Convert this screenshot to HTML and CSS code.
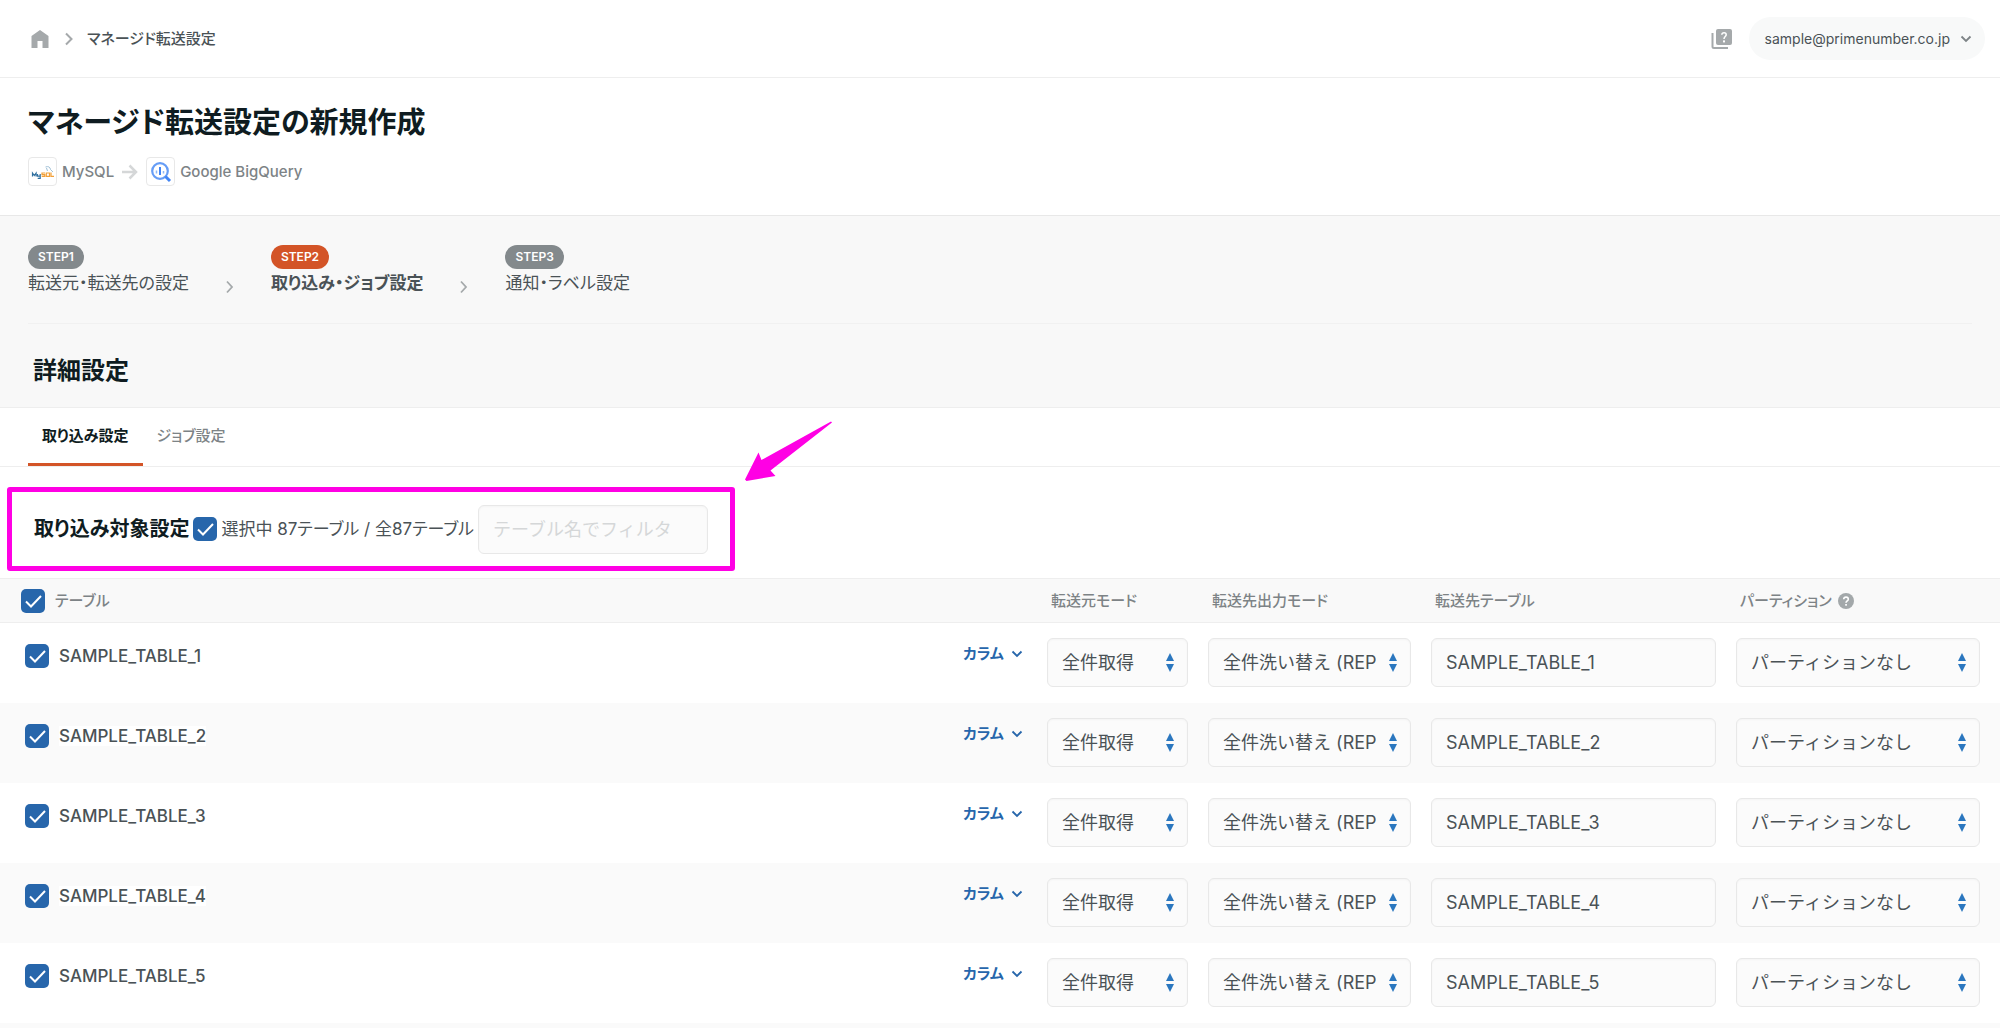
FILE: index.html
```html
<!DOCTYPE html>
<html lang="ja">
<head>
<meta charset="utf-8">
<meta name="viewport" content="width=device-width, initial-scale=1">
<title>マネージド転送設定の新規作成</title>
<link rel="stylesheet" href="styles.css">
</head>
<body>
<svg class="sprite" aria-hidden="true">
  <symbol id="chevron-down" viewBox="0 0 12 12"><path d="M1.500 3.500l4.500 4.500 4.500-4.500" fill="none" stroke="currentColor" stroke-width="1.800"/></symbol>
  <symbol id="chevron-right" viewBox="0 0 12 14"><path d="M3 1.500l5 5.500-5 5.500" fill="none" stroke="currentColor" stroke-width="1.800"/></symbol>
</svg>

<header class="topbar">
  <nav class="breadcrumb" aria-label="パンくず">
    <a class="home" href="#" aria-label="ホーム"><svg width="18" height="20" viewBox="0 0 18 20"><path d="M9 1L17.500 7V19H11.500V12H6.500V19H.5V7Z" fill="currentColor"/></svg></a>
    <svg class="crumb-sep" width="12" height="14" viewBox="0 0 12 14"><path d="M3 1.500l5.500 5.500-5.500 5.500" fill="none" stroke="currentColor" stroke-width="2"/></svg>
    <a class="crumb" href="#">マネージド転送設定</a>
  </nav>
  <div class="account">
    <a class="docs" href="#" aria-label="ドキュメント"><svg width="22" height="22" viewBox="0 0 22 22"><path d="M1.500 5v13.500a1.500 1.500 0 0 0 1.500 1.500H17" fill="none" stroke="currentColor" stroke-width="2"/><rect x="5" y="1" width="16" height="16" rx="2" fill="currentColor"/><path d="M10.800 6.700C11 4 15.200 4 15.200 6.700C15.200 8.600 13 8.500 13 11" fill="none" stroke="#fff" stroke-width="1.500"/><rect x="12" y="12.400" width="2" height="2" fill="#fff"/></svg></a>
    <button class="user" type="button">sample@primenumber.co.jp<svg width="12" height="12"><use href="#chevron-down"/></svg></button>
  </div>
</header>

<main>
<section class="intro">
  <h1>マネージド転送設定の新規作成</h1>
  <div class="route">
    <span class="logo"><svg width="24" height="24" viewBox="0 0 24 24"><g fill="none" stroke-width="1.200"><path d="M1.500 16.500v-3.500l1.800 2.500 1.800-2.500v3.500M6.500 14v2.200h2.500M9.200 14v4.300h-2.500" stroke="#2f6f9f"/><path d="M14 13h-3v1.700h2.700v1.700h-3M15.300 13h3.200v3.300h-3.200zM20 12.500v3.800h3" stroke="#f2a13a"/><path d="M14.500 7c3-1 4.500 0 5 2.500l2.500 2.500M15.500 8l1 3" stroke="#9fbfd6" stroke-width="1"/></g></svg></span>
    <span>MySQL</span>
    <svg class="route-arrow" width="16" height="16" viewBox="0 0 16 16"><path d="M0 8H13.500M7.500 1.500l6.500 6.500-6.500 6.500" fill="none" stroke="currentColor" stroke-width="2.500"/></svg>
    <span class="logo"><svg width="24" height="24" viewBox="0 0 24 24"><circle cx="11" cy="11" r="7.800" fill="none" stroke="#669df6" stroke-width="2.200"/><path d="M16.500 16.500l4.500 4.500" stroke="#4285f4" stroke-width="3"/><path d="M11 7v8" stroke="#4285f4" stroke-width="2"/><path d="M7.500 10.500v3M14.500 11v2.500" stroke="#8db8f8" stroke-width="1.500"/></svg></span>
    <span>Google BigQuery</span>
  </div>
</section>

<section class="setup">
  <ol class="steps">
    <li><span class="badge">STEP1</span><span class="step-name">転送元・転送先の設定</span></li>
    <li class="sep" aria-hidden="true"><svg width="12" height="14"><use href="#chevron-right"/></svg></li>
    <li class="current" aria-current="step"><span class="badge">STEP2</span><span class="step-name">取り込み・ジョブ設定</span></li>
    <li class="sep" aria-hidden="true"><svg width="12" height="14"><use href="#chevron-right"/></svg></li>
    <li><span class="badge">STEP3</span><span class="step-name">通知・ラベル設定</span></li>
  </ol>
  <h2>詳細設定</h2>
</section>

<nav class="tabs">
  <a class="tab active" href="#">取り込み設定</a>
  <a class="tab" href="#">ジョブ設定</a>
</nav>

<section class="filter">
  <h3>取り込み対象設定</h3>
  <input class="check" type="checkbox" id="selected" checked>
  <label for="selected">選択中 87テーブル / 全87テーブル</label>
  <input class="field" type="text" aria-label="テーブル名でフィルタ" placeholder="テーブル名でフィルタ">
  <svg class="callout" width="88" height="60" viewBox="0 0 88 60"><path d="M86 .5L87 1.500L25.500 49.500L30.500 55L1.500 60L0 58.500L13.500 31.500L16.500 39Z" fill="#ff00e4"/></svg>
</section>

<table>
  <colgroup><col><col class="c-cols"><col class="c-source"><col class="c-output"><col class="c-dest"><col class="c-part"></colgroup>
  <thead>
    <tr>
      <th colspan="2"><div class="all"><input class="check" type="checkbox" id="all" checked><label for="all">テーブル</label></div></th>
      <th>転送元モード</th><th>転送先出力モード</th><th>転送先テーブル</th>
      <th>パーティション <svg class="help" width="16" height="16" viewBox="0 0 16 16"><circle cx="8" cy="8" r="8" fill="#a3a8aa"/><path d="M5.700 6.300C5.900 3.300 10.300 3.500 10.300 6.200C10.300 7.900 8 7.900 8 9.800" fill="none" stroke="#fff" stroke-width="1.600"/><rect x="7.200" y="11" width="1.700" height="1.700" fill="#fff"/></svg></th>
    </tr>
  </thead>
  <tbody id="rows"></tbody>
</table>
</main>
<footer></footer>

<template id="row">
  <tr>
    <td><div class="name"><input class="check" type="checkbox" checked><label></label></div></td>
    <td><button class="cols" type="button">カラム<svg width="12" height="12"><use href="#chevron-down"/></svg></button></td>
    <td><div class="pick"><select class="field" aria-label="転送元モード"><option>全件取得</option></select></div></td>
    <td><div class="pick"><select class="field" aria-label="転送先出力モード"><option>全件洗い替え (REPLACE)</option></select></div></td>
    <td><input class="field dest" type="text" aria-label="転送先テーブル"></td>
    <td><div class="pick"><select class="field" aria-label="パーティション"><option>パーティションなし</option></select></div></td>
  </tr>
</template>
<script src="rows.js"></script>
</body>
</html>
```
FILE: styles.css
```css
* { box-sizing: border-box; }

body {
  display: flex;
  flex-direction: column;
  min-height: 100vh;
  margin: 0;
  background: #fff;
  color: #4a5256;
  font: 17px/24px Inter, "Noto Sans CJK JP", sans-serif;
  font-feature-settings: "palt";
}
footer { flex: 1; background: #fafafa; }

h1, h2, h3 { margin: 0; color: #0f1c21; font-weight: 600; }
a { color: inherit; text-decoration: none; }
button, input, select { font: inherit; color: inherit; }
button { border: 0; background: none; cursor: pointer; }
svg { flex: none; }
.sprite { position: absolute; width: 0; height: 0; }

.topbar {
  display: flex;
  align-items: center;
  justify-content: space-between;
  height: 78px;
  padding: 0 15px 0 31px;
  border-bottom: 1px solid #eee;
}
.breadcrumb, .account { display: flex; align-items: center; }
.home, .docs { display: flex; color: #a5a9ab; }
.crumb-sep { margin: 0 12px 0 14px; color: #a5a9ab; }
.crumb { font-size: 15px; font-weight: 500; }
.account { gap: 16px; }
.user {
  display: flex;
  align-items: center;
  gap: 10px;
  height: 43px;
  padding: 0 13px 0 16px;
  border-radius: 22px;
  background: #f8f9f9;
  font-size: 14px;
}
.user svg { color: #7d8386; }

.intro { padding: 25px 28px 29px; border-bottom: 1px solid #e8e8e8; }
.intro h1 { font-size: 29px; line-height: 40px; }
.route {
  display: flex;
  align-items: center;
  gap: 5px;
  margin-top: 14px;
  color: #7d8386;
  font-size: 15px;
  font-weight: 500;
}
.logo {
  display: grid;
  place-items: center;
  width: 29px;
  height: 29px;
  border: 1px solid #e8e8e8;
  border-radius: 4px;
}
.route-arrow { margin: 0 3px; color: #d5d7d8; }

.setup { padding: 29px 28px 0; background: #f8f8f8; border-bottom: 1px solid #eee; }
.steps {
  display: flex;
  gap: 35px;
  margin: 0;
  padding: 0 0 26px;
  border-bottom: 1px solid #f1f1f1;
  list-style: none;
}
.badge {
  display: block;
  width: fit-content;
  padding: 0 10px;
  border-radius: 12px;
  background: #83898c;
  color: #fff;
  font-size: 12px;
  font-weight: 600;
}
.step-name { display: block; line-height: 28px; }
.current .badge { background: #d35427; }
.current .step-name { font-weight: 600; }
.sep { display: flex; align-items: flex-end; padding-bottom: 3px; color: #a5a9ab; }
.setup h2 { padding: 31px 5px 20px; font-size: 24px; line-height: 32px; }

.tabs {
  display: flex;
  padding: 0 28px;
  border-bottom: 1px solid #eee;
  color: #7d8386;
  font-size: 15px;
  font-weight: 500;
}
.tab { padding: 16px 14px 15px; border-bottom: 3px solid transparent; }
.tab.active { border-color: #d35427; color: #0f1c21; font-weight: 600; }

.filter {
  position: relative;
  display: flex;
  align-items: center;
  gap: 4px;
  width: fit-content;
  height: 84px;
  margin: 20px 7px 7px;
  padding: 0 22px;
  border: 5px solid #ff00e4;
  border-radius: 3px;
}
.filter h3 { font-size: 20px; }
.filter .field { width: 230px; }
.callout { position: absolute; left: 733px; top: -71px; }

.check {
  appearance: none;
  flex: none;
  width: 24px;
  height: 24px;
  margin: 0;
  border-radius: 5px;
  background: #2766ab url("data:image/svg+xml,%3Csvg xmlns='http://www.w3.org/2000/svg' viewBox='0 0 24 24'%3E%3Cpath d='M5 12.500l5 5L20 7' fill='none' stroke='white' stroke-width='2'/%3E%3C/svg%3E");
}
.field {
  display: block;
  width: 100%;
  height: 49px;
  padding: 0 14px;
  border: 1px solid #e8e8e8;
  border-radius: 6px;
  background: #fbfbfb;
  box-shadow: inset 0 1px 2px #00000008;
  font-size: 18px;
  font-feature-settings: normal;
}
.field::placeholder { color: #d5d7d8; opacity: 1; }

table { width: 100%; border-collapse: collapse; table-layout: fixed; }
.c-cols { width: 92px; }
.c-source { width: 161px; }
.c-output { width: 223px; }
.c-dest { width: 305px; }
.c-part { width: 264px; }
th {
  height: 44px;
  padding: 0 4px;
  border: solid #eee;
  border-width: 1px 0;
  background: #f9f9f9;
  color: #7d8386;
  font-size: 15px;
  font-weight: 500;
  text-align: left;
}
th:first-child { padding-left: 21px; }
.all, .name { display: flex; align-items: center; gap: 10px; }
.help { vertical-align: -3px; margin-left: 2px; }
td { height: 80px; padding: 15px 20px 16px 0; vertical-align: top; }
tr:nth-child(even) td { background: #fafafa; }
td:first-child { padding: 21px 0 0 25px; }
.name { font-weight: 500; }
tr:nth-child(even) .name label { background: #fff; line-height: 20px; }
.cols {
  display: flex;
  align-items: center;
  gap: 7px;
  padding: 4px 0 0 8px;
  color: #2766ab;
  font-size: 15px;
  font-weight: 600;
  font-feature-settings: inherit;
}
.pick { position: relative; }
.pick select { appearance: none; padding-right: 34px; }
.pick::after {
  content: "";
  position: absolute;
  right: 14px;
  top: 15px;
  width: 8px;
  height: 19px;
  background: #2b77bf;
  clip-path: polygon(50% 0, 100% 8px, 0 8px, 0 11px, 100% 11px, 50% 100%, 0 11px, 0 8px);
  pointer-events: none;
}
```
FILE: rows.js
```js
const body = document.getElementById("rows");
const template = document.getElementById("row");

for (let i = 1; i <= 5; i++) {
  const row = template.content.cloneNode(true);
  const label = row.querySelector("label");
  label.textContent = "SAMPLE_TABLE_" + i;
  label.htmlFor = "table-" + i;
  row.querySelector(".check").id = "table-" + i;
  row.querySelector(".dest").value = "SAMPLE_TABLE_" + i;
  body.append(row);
}
```
